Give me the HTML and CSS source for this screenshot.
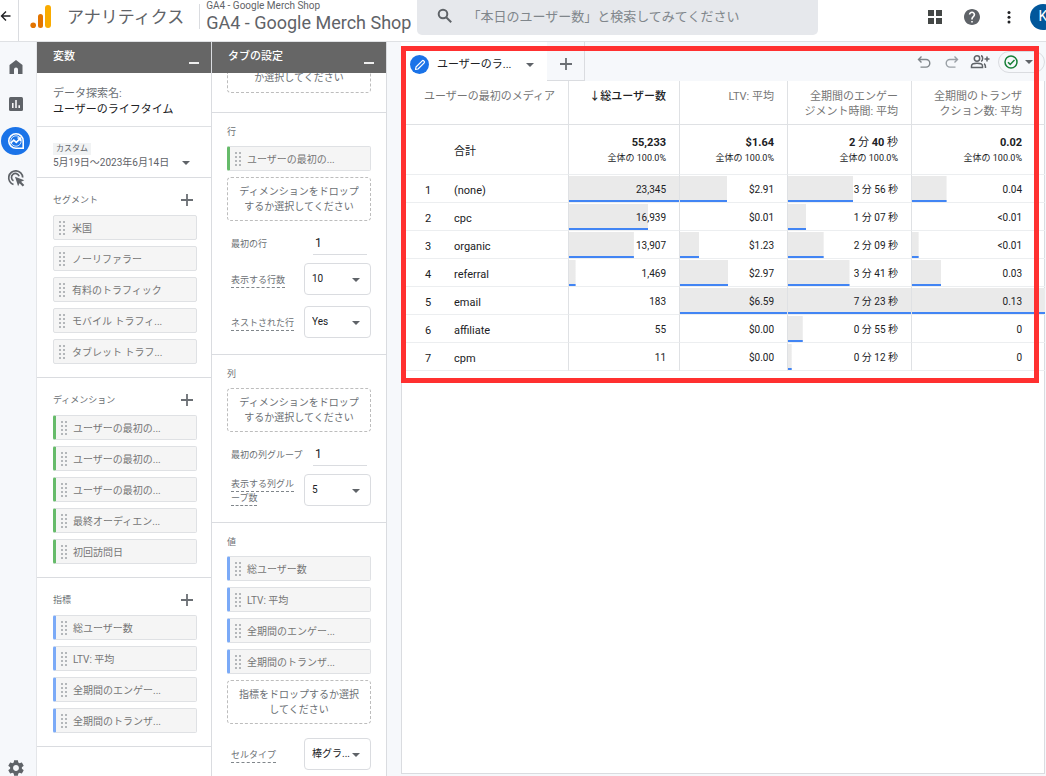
FILE: index.html
```html
<!DOCTYPE html>
<html lang="ja">
<head>
<meta charset="utf-8">
<meta name="viewport" content="width=device-width, initial-scale=1">
<title>アナリティクス</title>
<link rel="stylesheet" href="styles.css">
</head>
<body>
<svg class="defs" width="0" height="0" aria-hidden="true">
  <symbol id="grip" viewBox="0 0 7 14"><path fill="#b4b7ba" d="M0 0h2v2H0zM4 0h2v2H4zM0 4h2v2H0zM4 4h2v2H4zM0 8h2v2H0zM4 8h2v2H4zM0 12h2v2H0zM4 12h2v2H4z"/></symbol>
  <symbol id="plus" viewBox="0 0 14 14"><path fill="none" stroke="#6b6f74" stroke-width="1.800" d="M7 1v12M1 7h12"/></symbol>
  <symbol id="arrow" viewBox="0 0 8 4"><path fill="#5f6368" d="M0 0h8L4 4z"/></symbol>
</svg>
<header class="topbar">
  <button class="back" aria-label="戻る"><svg width="12" height="12" viewBox="0 0 12 12"><path fill="none" stroke="#202124" stroke-width="1.400" d="M10.500 6H1.500M6 1.500 1.500 6 6 10.500"/></svg></button>
  <a class="brand" href="#"><svg width="22" height="24" viewBox="0 0 22 24"><rect x="15" y="0" width="6" height="23" rx="3" fill="#f9ab00"/><rect x="8" y="9" width="5" height="14" rx="2.500" fill="#e37400"/><circle cx="3.200" cy="20.200" r="2.800" fill="#e37400"/></svg><span>アナリティクス</span></a>
  <div class="property"><div class="property-small">GA4 - Google Merch Shop</div><div class="property-large">GA4 - Google Merch Shop</div></div>
  <label class="search"><svg width="16" height="16" viewBox="0 0 16 16" fill="none" stroke="#5f6368" stroke-width="2"><circle cx="6" cy="6" r="4.300"/><path d="m9.200 9.200 5 5"/></svg><input type="search" aria-label="検索" placeholder="「本日のユーザー数」と検索してみてください"></label>
  <div class="actions">
    <button aria-label="アプリ"><svg width="16" height="16" viewBox="0 0 16 16"><path fill="#444746" d="M1 1h6v6H1zM9 1h6v6H9zM1 9h6v6H1zM9 9h6v6H9z"/></svg></button>
    <button aria-label="ヘルプ"><svg width="16" height="16" viewBox="2 2 20 20"><path fill="#5f6368" d="M12 2C6.480 2 2 6.480 2 12s4.480 10 10 10 10-4.480 10-10S17.520 2 12 2zm1 17h-2v-2h2v2zm2.070-7.750-.9.920C13.450 12.900 13 13.500 13 15h-2v-.5c0-1.100.45-2.100 1.170-2.830l1.240-1.260c.37-.36.59-.86.59-1.410 0-1.100-.9-2-2-2s-2 .9-2 2H8c0-2.210 1.790-4 4-4s4 1.790 4 4c0 .88-.36 1.680-.93 2.250z"/></svg></button>
    <button aria-label="その他"><svg width="16" height="16" viewBox="0 0 16 16" fill="#202124"><circle cx="8" cy="3.500" r="1.500"/><circle cx="8" cy="8.300" r="1.500"/><circle cx="8" cy="13.100" r="1.500"/></svg></button>
    <button class="avatar" aria-label="アカウント">K</button>
  </div>
</header>

<div class="workspace">
  <nav class="rail" aria-label="メイン">
    <a href="#" aria-label="ホーム"><svg width="16" height="16" viewBox="0 0 16 16"><path fill="#5f6368" d="M1.500 6 8 1l6.500 5v9H10v-4.500a2 2 0 0 0-4 0V15H1.500z"/></svg></a>
    <a href="#" aria-label="レポート"><svg width="16" height="16" viewBox="0 0 16 16"><rect x="1" y="1" width="14" height="14" rx="1.500" fill="#5f6368"/><path fill="none" stroke="#fff" stroke-width="1.500" d="M4.800 7v5M8 4v8M11.200 9.200V12"/></svg></a>
    <a class="active" href="#" aria-label="探索"><svg width="18" height="18" viewBox="0 0 18 18" fill="none" stroke="#fff" stroke-width="1.600"><path d="M9 1.800A7.200 7.200 0 1 0 9 16.200h7.200V9A7.200 7.200 0 0 0 9 1.800z"/><circle cx="9" cy="9" r="5.200" stroke-width=".8"/><path d="m3.500 11.300 3.300-3.200 2.500 2.300 4-4M10.500 6h3v3"/></svg></a>
    <a href="#" aria-label="広告"><svg width="18" height="18" viewBox="0 0 18 18" fill="none" stroke="#5f6368" stroke-width="1.700"><path d="M6.500 15.500A7 7 0 1 1 15.700 8.500M6.500 11.800a3.900 3.900 0 1 1 5.600-4.600"/><path fill="#5f6368" stroke="none" d="m8 7.700 9.300 3.500-3.200 1.500 3.200 3.200-1.600 1.600-3.200-3.200-1.400 3z"/></svg></a>
    <a class="settings" href="#" aria-label="管理"><svg width="18" height="18" viewBox="1 1 22 22"><path fill="#5f6368" d="M19.140 12.940c.04-.3.060-.61.060-.94 0-.32-.02-.64-.07-.94l2.030-1.580c.18-.14.23-.41.120-.61l-1.920-3.320c-.12-.22-.37-.29-.59-.22l-2.390.96c-.5-.38-1.030-.7-1.620-.94l-.36-2.540c-.04-.24-.24-.41-.48-.41h-3.840c-.24 0-.43.170-.47.410l-.36 2.540c-.59.240-1.130.570-1.620.940l-2.390-.96c-.22-.08-.47 0-.59.220L2.740 8.870c-.12.210-.08.470.120.610l2.030 1.580c-.05.300-.09.630-.09.940s.02.640.070.940l-2.030 1.580c-.18.140-.23.410-.12.610l1.920 3.320c.12.220.37.290.59.220l2.390-.96c.5.380 1.030.7 1.620.94l.36 2.540c.05.240.24.410.48.410h3.840c.24 0 .44-.17.470-.41l.36-2.540c.59-.24 1.130-.56 1.620-.94l2.390.96c.22.080.47 0 .59-.22l1.920-3.320c.12-.22.070-.47-.12-.61l-2.010-1.580zM12 15.600c-1.980 0-3.600-1.620-3.600-3.600s1.620-3.600 3.600-3.600 3.600 1.620 3.600 3.600-1.620 3.600-3.600 3.600z"/></svg></a>
  </nav>

  <aside class="panel">
    <div class="panel-head"><h2>変数</h2><button class="minimize" aria-label="変数を最小化"></button></div>
    <div class="panel-body">
      <section class="exploration"><div class="caption">データ探索名:</div><div class="name">ユーザーのライフタイム</div></section>
      <section class="dates"><span class="badge">カスタム</span><button class="range"><span>5月19日～2023年6月14日</span><svg width="8" height="4"><use href="#arrow"/></svg></button></section>
      <section class="group">
        <div class="group-head"><h3>セグメント</h3><button aria-label="セグメントを追加"><svg width="14" height="14"><use href="#plus"/></svg></button></div>
        <div class="chips">
          <button class="chip"><svg width="7" height="14"><use href="#grip"/></svg>米国</button>
          <button class="chip"><svg width="7" height="14"><use href="#grip"/></svg>ノーリファラー</button>
          <button class="chip"><svg width="7" height="14"><use href="#grip"/></svg>有料のトラフィック</button>
          <button class="chip"><svg width="7" height="14"><use href="#grip"/></svg>モバイル トラフィ...</button>
          <button class="chip"><svg width="7" height="14"><use href="#grip"/></svg>タブレット トラフ...</button>
        </div>
      </section>
      <section class="group">
        <div class="group-head"><h3>ディメンション</h3><button aria-label="ディメンションを追加"><svg width="14" height="14"><use href="#plus"/></svg></button></div>
        <div class="chips">
          <button class="chip dimension"><svg width="7" height="14"><use href="#grip"/></svg>ユーザーの最初の...</button>
          <button class="chip dimension"><svg width="7" height="14"><use href="#grip"/></svg>ユーザーの最初の...</button>
          <button class="chip dimension"><svg width="7" height="14"><use href="#grip"/></svg>ユーザーの最初の...</button>
          <button class="chip dimension"><svg width="7" height="14"><use href="#grip"/></svg>最終オーディエン...</button>
          <button class="chip dimension"><svg width="7" height="14"><use href="#grip"/></svg>初回訪問日</button>
        </div>
      </section>
      <section class="group">
        <div class="group-head"><h3>指標</h3><button aria-label="指標を追加"><svg width="14" height="14"><use href="#plus"/></svg></button></div>
        <div class="chips">
          <button class="chip metric"><svg width="7" height="14"><use href="#grip"/></svg>総ユーザー数</button>
          <button class="chip metric"><svg width="7" height="14"><use href="#grip"/></svg>LTV: 平均</button>
          <button class="chip metric"><svg width="7" height="14"><use href="#grip"/></svg>全期間のエンゲー...</button>
          <button class="chip metric"><svg width="7" height="14"><use href="#grip"/></svg>全期間のトランザ...</button>
        </div>
      </section>
    </div>
  </aside>

  <aside class="panel">
    <div class="panel-head"><h2>タブの設定</h2><button class="minimize" aria-label="タブの設定を最小化"></button></div>
    <div class="panel-body">
      <section class="config first"><button class="drop">か選択してください</button></section>
      <section class="config">
        <h3>行</h3>
        <div class="chips">
          <button class="chip dimension"><svg width="7" height="14"><use href="#grip"/></svg>ユーザーの最初の...</button>
          <button class="drop">ディメンションをドロップ<br>するか選択してください</button>
        </div>
        <div class="field number"><label for="first-row">最初の行</label><input id="first-row" type="text" value="1"></div>
        <div class="field"><label class="hint" for="row-count">表示する行数</label><span class="select"><select id="row-count"><option>10</option></select><svg width="8" height="4"><use href="#arrow"/></svg></span></div>
        <div class="field next"><label class="hint" for="nested">ネストされた行</label><span class="select"><select id="nested"><option>Yes</option></select><svg width="8" height="4"><use href="#arrow"/></svg></span></div>
      </section>
      <section class="config">
        <h3>列</h3>
        <button class="drop">ディメンションをドロップ<br>するか選択してください</button>
        <div class="field number"><label for="first-col">最初の列グループ</label><input id="first-col" type="text" value="1"></div>
        <div class="field"><label class="hint" for="col-count">表示する列グループ数</label><span class="select"><select id="col-count"><option>5</option></select><svg width="8" height="4"><use href="#arrow"/></svg></span></div>
      </section>
      <section class="config">
        <h3>値</h3>
        <div class="chips">
          <button class="chip metric"><svg width="7" height="14"><use href="#grip"/></svg>総ユーザー数</button>
          <button class="chip metric"><svg width="7" height="14"><use href="#grip"/></svg>LTV: 平均</button>
          <button class="chip metric"><svg width="7" height="14"><use href="#grip"/></svg>全期間のエンゲー...</button>
          <button class="chip metric"><svg width="7" height="14"><use href="#grip"/></svg>全期間のトランザ...</button>
          <button class="drop">指標をドロップするか選択<br>してください</button>
        </div>
        <div class="field cell-type"><label class="hint" for="cell">セルタイプ</label><span class="select"><select id="cell"><option>棒グラ...</option></select><svg width="8" height="4"><use href="#arrow"/></svg></span></div>
      </section>
    </div>
  </aside>

  <main class="canvas">
    <div class="highlight"></div>
    <div class="tabs">
      <button class="tab"><span class="pencil"><svg width="12" height="12" viewBox="0 0 12 12"><path fill="none" stroke="#fff" stroke-width="1.200" stroke-linejoin="round" d="M1.500 10.500 2 8l6.200-6.200a1 1 0 0 1 1.400 0l.6.600a1 1 0 0 1 0 1.400L4 10z"/></svg></span><span>ユーザーのラ...</span><svg class="tab-arrow" width="8" height="4"><use href="#arrow"/></svg></button>
      <button class="new-tab" aria-label="新しいタブ"><svg width="14" height="14"><use href="#plus"/></svg></button>
      <div class="tools">
        <button aria-label="元に戻す"><svg width="14" height="14" viewBox="0 0 14 14" fill="none" stroke="#80868b" stroke-width="1.400"><path d="M4.500 1.500 1.500 4.500l3 3M1.500 4.500H9a3.800 3.800 0 0 1 0 7.600H3.500"/></svg></button>
        <button aria-label="やり直す"><svg width="14" height="14" viewBox="0 0 14 14" fill="none" stroke="#9aa0a6" stroke-width="1.400"><path d="m9.500 1.500 3 3-3 3M12.500 4.500H5a3.800 3.800 0 0 0 0 7.600h5.500"/></svg></button>
        <button aria-label="共有"><svg width="20" height="16" viewBox="0 0 20 16" fill="none" stroke="#5f6368" stroke-width="1.500"><circle cx="7" cy="4.500" r="2.700"/><path d="M1.500 13.500V12c0-1.800 3-2.700 5.500-2.700s5.500.9 5.500 2.700v1.500zM11 1.800c2.200.4 2.200 5 0 5.400M14 9.800c1.300.6 1.500 1.500 1.500 4.200M17 2.500v5M14.500 5h5"/></svg></button>
        <button class="status" aria-label="データの状態"><svg width="14" height="14" viewBox="0 0 14 14" fill="none" stroke="#188038" stroke-width="1.500"><circle cx="7" cy="7" r="6"/><path d="m4 7.200 2.200 2.200L10.500 5"/></svg><svg width="8" height="4"><use href="#arrow"/></svg></button>
      </div>
    </div>
    <div class="sheet">
      <table>
        <colgroup><col class="c-rank"><col class="c-name"><col class="c-users"><col class="c-ltv"><col class="c-time"><col class="c-trans"></colgroup>
        <thead>
          <tr><th colspan="2" scope="col">ユーザーの最初のメディア</th><th class="sorted" scope="col">↓総ユーザー数</th><th scope="col">LTV: 平均</th><th scope="col">全期間のエンゲー<br>ジメント時間: 平均</th><th scope="col">全期間のトランザ<br>クション数: 平均</th></tr>
        </thead>
        <tbody>
          <tr class="total"><td></td><th scope="row">合計</th><td><b>55,233</b><small>全体の 100.0%</small></td><td><b>$1.64</b><small>全体の 100.0%</small></td><td><b>2 <span>分</span> 40 <span>秒</span></b><small>全体の 100.0%</small></td><td><b>0.02</b><small>全体の 100.0%</small></td></tr>
          <tr><td>1</td><th scope="row">(none)</th><td style="--bar:100%">23,345</td><td style="--bar:44%">$2.91</td><td style="--bar:53%">3 分 56 秒</td><td style="--bar:26%">0.04</td></tr>
          <tr><td>2</td><th scope="row">cpc</th><td style="--bar:72%">16,939</td><td style="--bar:0%">$0.01</td><td style="--bar:15%">1 分 07 秒</td><td style="--bar:0%">&lt;0.01</td></tr>
          <tr><td>3</td><th scope="row">organic</th><td style="--bar:59%">13,907</td><td style="--bar:18%">$1.23</td><td style="--bar:29%">2 分 09 秒</td><td style="--bar:5%">&lt;0.01</td></tr>
          <tr><td>4</td><th scope="row">referral</th><td style="--bar:6%">1,469</td><td style="--bar:45%">$2.97</td><td style="--bar:50%">3 分 41 秒</td><td style="--bar:22%">0.03</td></tr>
          <tr><td>5</td><th scope="row">email</th><td style="--bar:0%">183</td><td style="--bar:100%">$6.59</td><td style="--bar:100%">7 分 23 秒</td><td style="--bar:100%">0.13</td></tr>
          <tr><td>6</td><th scope="row">affiliate</th><td style="--bar:0%">55</td><td style="--bar:0%">$0.00</td><td style="--bar:12%">0 分 55 秒</td><td style="--bar:0%">0</td></tr>
          <tr><td>7</td><th scope="row">cpm</th><td style="--bar:0%">11</td><td style="--bar:0%">$0.00</td><td style="--bar:3%">0 分 12 秒</td><td style="--bar:0%">0</td></tr>
        </tbody>
      </table>
    </div>
  </main>
</div>
</body>
</html>
```
FILE: styles.css
```css
* { box-sizing: border-box; }
body {
  margin: 0;
  height: 100vh;
  display: flex;
  flex-direction: column;
  overflow: hidden;
  background: #fff;
  color: #202124;
  font: 10px/15px Roboto, "Noto Sans CJK JP", sans-serif;
}
button, input, select { font: inherit; color: inherit; }
button { background: none; border: 0; padding: 0; cursor: pointer; }
h2, h3 { margin: 0; font-weight: 400; }
svg { display: block; flex: none; }
.defs { position: absolute; }

.topbar {
  display: flex;
  height: 42px;
  flex: none;
  border-bottom: 1px solid #dfe1e4;
  overflow: hidden;
}
.back { width: 19px; padding-bottom: 9px; border-right: 1px solid #dadce0; }
.brand {
  display: flex;
  gap: 15px;
  padding: 5px 15px 0 11px;
  color: #5f6368;
  font-size: 17px;
  line-height: 24px;
  text-decoration: none;
  white-space: nowrap;
}
.property {
  height: 25px;
  margin-top: 4px;
  padding-left: 6px;
  border-left: 1px solid #dadce0;
  color: #5f6368;
  white-space: nowrap;
}
.property-small { margin-top: -5px; line-height: 13px; }
.property-large { font-size: 18px; line-height: 22px; }
.search {
  display: flex;
  flex: 1;
  align-items: center;
  gap: 14px;
  min-width: 0;
  height: 35px;
  margin-left: 6px;
  padding: 0 20px 3px;
  border-radius: 0 0 5px 5px;
  background: #e6e8ec;
}
.search input { flex: 1; min-width: 0; padding: 0; border: 0; outline: 0; background: none; font-size: 13px; }
.search input::placeholder { color: #80868b; opacity: 1; }
.actions { display: flex; align-items: center; height: 33px; margin: 0 -10px 0 109px; gap: 21px; }
.actions .avatar {
  width: 26px;
  height: 26px;
  margin-left: -8px;
  border-radius: 50%;
  background: #01579b;
  color: #fff;
  font-size: 14px;
}

.workspace { display: flex; flex: 1; min-height: 0; background: #f6f8fb; }
.rail {
  display: flex;
  flex-direction: column;
  gap: 9px;
  width: 37px;
  padding: 11px 0 0 1px;
  border-right: 1px solid #e4e6e9;
}
.rail a { display: grid; place-items: center; flex: none; width: 29px; height: 28px; }
.rail .active { border-radius: 50%; background: #1a73e8; }
.rail .settings { margin: auto 0 -6px; }

.panel { display: flex; flex-direction: column; width: 175px; flex: none; border-right: 1px solid #dadce0; background: #fff; }
.panel-head {
  display: flex;
  flex: none;
  justify-content: space-between;
  height: 31px;
  padding: 7px 12px 0 16px;
  background: #666;
  color: #fff;
}
.panel-head h2 { font-size: 11px; line-height: 16px; font-weight: 500; }
.minimize { width: 10px; height: 15px; border-bottom: 2px solid #eee; }
.panel-body { flex: 1; min-height: 0; overflow: hidden; }
.exploration { height: 54px; padding: 13px 16px 0; border-bottom: 1px solid #dfe1e4; font-size: 11px; line-height: 16px; }
.caption { color: #6b6f74; }
.dates { height: 51px; padding: 16px 16px 0; border-bottom: 1px solid #dadce0; }
.badge { display: block; width: 38px; padding-left: 3px; background: #f1f3f4; color: #5f6368; font-size: 8px; line-height: 12px; }
.range { display: flex; width: 100%; align-items: center; justify-content: space-between; padding-right: 5px; line-height: 16px; color: #5f6368; white-space: nowrap; }
.group { padding: 0 14px 13px 16px; border-bottom: 1px solid #dadce0; }
.group-head { display: flex; align-items: center; justify-content: space-between; height: 37px; padding: 7px 3px 0 0; }
h3 { color: #6b6f74; font-size: 9px; }
.chips { display: flex; flex-direction: column; gap: 6px; }
.chip {
  display: flex;
  align-items: center;
  gap: 6px;
  width: 100%;
  height: 25px;
  padding: 2px 5px 0;
  border: 1px solid #dfe1e4;
  border-radius: 2px;
  background: #f5f5f5;
  color: #757575;
  white-space: nowrap;
}
.chip svg { margin-bottom: 2px; }
.chip.dimension, .chip.metric { gap: 5px; }
.chip.dimension { border-left: 3px solid #66bb6a; }
.chip.metric { border-left: 3px solid #7baaf7; }

.config { padding: 0 15px 16px; border-bottom: 1px solid #dadce0; }
.config.first { padding-bottom: 19px; }
.config h3 { height: 33px; padding-top: 12px; }
.drop { display: block; width: 100%; height: 44px; border: 1px dashed #bdbdbd; border-radius: 4px; color: #6b6f74; text-align: center; white-space: nowrap; }
.first .drop { height: 20px; padding-bottom: 9px; border-top: 0; border-radius: 0 0 4px 4px; line-height: 10px; }
.field { display: flex; align-items: center; justify-content: space-between; height: 32px; margin-top: 8px; padding-left: 4px; color: #6b6f74; font-size: 9px; line-height: 14px; }
.field.number { height: 24px; margin-top: 10px; padding-right: 4px; }
.field.next { margin-top: 11px; }
.field.cell-type { margin-top: 14px; }
.field label { flex: 1; padding-top: 1px; }
.field .hint { padding-right: 8px; text-decoration: underline dashed #80868b 1px; text-underline-offset: 4px; }
.number label { white-space: nowrap; }
.number input { width: 54px; height: 24px; padding: 0 0 0 2px; border: 0; border-bottom: 1px solid #dadce0; background: none; color: #202124; font-size: 12px; }
.select { display: grid; width: 67px; height: 32px; align-items: center; color: #202124; }
.select select, .select svg { grid-area: 1 / 1; }
.select select { width: 100%; height: 100%; appearance: none; padding: 0 0 0 7px; border: 1px solid #dadce0; border-radius: 4px; background: #fff; font-size: 10px; }
.select svg { justify-self: end; margin: 1px 11px 0 0; pointer-events: none; }

.canvas { position: relative; display: flex; flex: 1; flex-direction: column; min-width: 0; padding: 0 1px 2px 14px; }
.highlight { position: absolute; z-index: 1; inset: 4px 7px auto 14px; height: 337px; border: 5px solid #ff3030; pointer-events: none; }
.tabs { display: flex; flex: none; height: 39px; }
.tab { display: flex; align-items: center; width: 146px; padding: 6px 13px 0 9px; background: #fff; font-size: 11px; white-space: nowrap; }
.pencil { display: grid; place-items: center; width: 19px; height: 19px; margin-right: 8px; border-radius: 50%; background: #1a73e8; }
.tab-arrow { margin-left: auto; }
.new-tab { display: grid; place-items: center; width: 38px; padding-top: 6px; border-right: 1px solid #dadce0; border-bottom: 1px solid #dadce0; }
.tools { display: flex; align-items: center; gap: 12px; margin-left: auto; }
.tools button:nth-child(2) { margin-left: 2px; }
.tools button:nth-child(3) { margin-left: -1px; }
.status { display: flex; align-items: center; gap: 7px; width: 47px; height: 22px; margin-left: -4px; padding: 0 5px; border: 1px solid #dadce0; border-radius: 11px; }
.sheet { flex: 1; min-height: 0; border: solid #dadce0; border-width: 0 1px 1px; background: #fff; }

table { width: 100%; table-layout: fixed; border-collapse: separate; border-spacing: 0; }
.c-rank { width: 52px; }
.c-name { width: 115px; }
.c-users { width: 111px; }
.c-ltv { width: 108px; }
.c-time { width: 124px; }
.c-trans { width: 133px; }
th, td { padding: 2px 0 0; font-weight: 400; text-align: right; white-space: nowrap; border-bottom: 1px solid #eceef0; }
td, thead th, tbody th { border-right: 1px solid #dfe1e4; padding-right: 13px; }
td:first-child { border-right: 0; text-align: center; padding-right: 0; font-size: 11px; }
tr > :last-child { border-right: 0; padding-right: 23px; }
thead th { height: 44px; padding-top: 8px; border-bottom-color: #dfe1e4; color: #757575; font-size: 11px; line-height: 15px; vertical-align: top; }
thead .sorted { color: #202124; font-weight: 500; }
tbody th, tbody td:first-child { padding-top: 4px; }
tbody th { text-align: left; font-size: 11px; }
tbody tr { height: 28px; }
tbody td:not(:first-child) {
  background:
    linear-gradient(#4285f4, #4285f4) left bottom / var(--bar, 0) 2px no-repeat,
    linear-gradient(#eaeaea, #eaeaea) left bottom / var(--bar, 0) 26px no-repeat;
}
.total { height: 50px; }
.total b, .total small { display: block; }
.total b { font-size: 11px; line-height: 16px; font-weight: 700; }
.total b span { font-weight: 400; }
.total small { font-size: 9px; line-height: 15px; }
```
